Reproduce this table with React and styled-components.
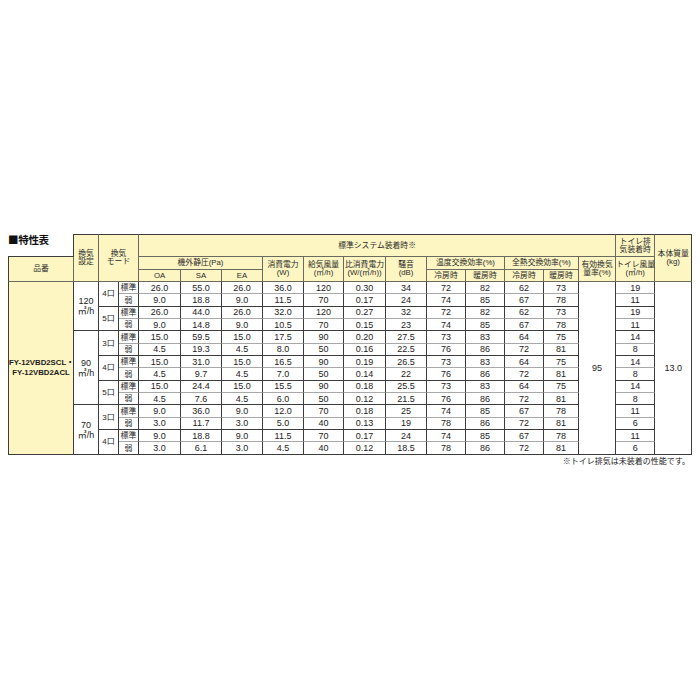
import React from 'react';
import styled, { createGlobalStyle } from 'styled-components';

const GlobalStyle = createGlobalStyle`
  html, body { margin: 0; padding: 0; background: #ffffff; }
  body {
    font-family: "Liberation Sans", "Noto Sans CJK JP", sans-serif;
    color: #222;
  }
`;

const YELLOW = '#fdf6c3';
const DARK = '#3c3c3c';
const SOFT = '#a8a8a8';
const HEAD_LINE = '#6a6a5e';

const Page = styled.div`
  width: 700px;
  height: 700px;
  box-sizing: border-box;
  padding: 234px 8px 0 8px;
`;

const Table = styled.table`
  width: 684px;
  table-layout: fixed;
  border-collapse: separate;
  border-spacing: 0;
`;

const Col = styled.col`
  width: ${p => p.$w}px;
`;

const HeadRow = styled.tr`
  height: ${p => p.$h}px;
`;

const BodyRow = styled.tr`
  height: 12.35px;
`;

const TitleCell = styled.th`
  padding: 0;
  background: #fff;
  text-align: left;
  vertical-align: top;
  font-family: "Noto Sans CJK JP", sans-serif;
  font-size: 10.5px;
  line-height: 11px;
  font-weight: bold;
  color: #111;
  letter-spacing: -0.3px;
  border-right: 1px solid ${DARK};
  border-bottom: 1px solid ${DARK};
  white-space: nowrap;
`;

const Th = styled.th`
  padding: 0;
  background: ${YELLOW};
  font-weight: normal;
  font-size: 7.8px;
  line-height: 7.8px;
  color: #2a2a2a;
  text-align: center;
  vertical-align: middle;
  white-space: nowrap;
  overflow: visible;
  border-right: 1px solid ${p => (p.$outer ? DARK : HEAD_LINE)};
  border-bottom: 1px solid ${HEAD_LINE};
  border-top: ${p => (p.$top ? `1px solid ${DARK}` : '0')};
  border-left: ${p => (p.$left ? `1px solid ${DARK}` : '0')};
`;

const Td = styled.td`
  padding: 0;
  font-size: 9px;
  line-height: 10px;
  color: #222;
  text-align: center;
  vertical-align: middle;
  white-space: nowrap;
  border-right: 1px solid ${DARK};
  border-bottom: 1px solid ${p => (p.$soft ? SOFT : DARK)};
`;

const CjkTd = styled(Td)`
  font-size: 8px;
  line-height: 9px;
`;

const ModelCell = styled.td`
  padding: 0;
  background: ${YELLOW};
  font-size: 7.8px;
  line-height: 10px;
  font-weight: bold;
  color: #1a1a1a;
  text-align: center;
  vertical-align: middle;
  white-space: nowrap;
  border-left: 1px solid ${DARK};
  border-right: 1px solid ${DARK};
  border-bottom: 1px solid ${DARK};
`;

const Note = styled.div`
  text-align: right;
  font-family: "Noto Sans CJK JP", sans-serif;
  font-size: 8px;
  line-height: 10px;
  color: #222;
  margin-top: 1px;
  padding-right: 2px;
`;

const widths = [66, 25, 20, 20, 42, 41, 41, 41, 40, 42, 41, 39, 39, 39, 35, 37, 39, 37];

const groups = [
  {
    set: '120',
    modes: [
      {
        m: '4口',
        rows: [
          ['標準', ['26.0', '55.0', '26.0', '36.0', '120', '0.30', '34', '72', '82', '62', '73'], '19'],
          ['弱', ['9.0', '18.8', '9.0', '11.5', '70', '0.17', '24', '74', '85', '67', '78'], '11'],
        ],
      },
      {
        m: '5口',
        rows: [
          ['標準', ['26.0', '44.0', '26.0', '32.0', '120', '0.27', '32', '72', '82', '62', '73'], '19'],
          ['弱', ['9.0', '14.8', '9.0', '10.5', '70', '0.15', '23', '74', '85', '67', '78'], '11'],
        ],
      },
    ],
  },
  {
    set: '90',
    modes: [
      {
        m: '3口',
        rows: [
          ['標準', ['15.0', '59.5', '15.0', '17.5', '90', '0.20', '27.5', '73', '83', '64', '75'], '14'],
          ['弱', ['4.5', '19.3', '4.5', '8.0', '50', '0.16', '22.5', '76', '86', '72', '81'], '8'],
        ],
      },
      {
        m: '4口',
        rows: [
          ['標準', ['15.0', '31.0', '15.0', '16.5', '90', '0.19', '26.5', '73', '83', '64', '75'], '14'],
          ['弱', ['4.5', '9.7', '4.5', '7.0', '50', '0.14', '22', '76', '86', '72', '81'], '8'],
        ],
      },
      {
        m: '5口',
        rows: [
          ['標準', ['15.0', '24.4', '15.0', '15.5', '90', '0.18', '25.5', '73', '83', '64', '75'], '14'],
          ['弱', ['4.5', '7.6', '4.5', '6.0', '50', '0.12', '21.5', '76', '86', '72', '81'], '8'],
        ],
      },
    ],
  },
  {
    set: '70',
    modes: [
      {
        m: '3口',
        rows: [
          ['標準', ['9.0', '36.0', '9.0', '12.0', '70', '0.18', '25', '74', '85', '67', '78'], '11'],
          ['弱', ['3.0', '11.7', '3.0', '5.0', '40', '0.13', '19', '78', '86', '72', '81'], '6'],
        ],
      },
      {
        m: '4口',
        rows: [
          ['標準', ['9.0', '18.8', '9.0', '11.5', '70', '0.17', '24', '74', '85', '67', '78'], '11'],
          ['弱', ['3.0', '6.1', '3.0', '4.5', '40', '0.12', '18.5', '78', '86', '72', '81'], '6'],
        ],
      },
    ],
  },
];

const rows = [];
groups.forEach(g => {
  const span = g.modes.reduce((n, md) => n + md.rows.length, 0);
  g.modes.forEach((md, mi) => {
    md.rows.forEach((r, ri) => {
      rows.push({
        set: g.set,
        setStart: mi === 0 && ri === 0,
        setSpan: span,
        mode: md.m,
        modeStart: ri === 0,
        kind: r[0],
        vals: r[1],
        toilet: r[2],
      });
    });
  });
});

export default function App() {
  return (
    <Page>
      <GlobalStyle />
      <Table>
        <colgroup>
          {widths.map((w, i) => (
            <Col key={i} $w={w} />
          ))}
        </colgroup>
        <thead>
          <HeadRow $h={23}>
            <TitleCell>■特性表</TitleCell>
            <Th rowSpan={3} $top>
              換気
              <br />
              設定
            </Th>
            <Th rowSpan={3} colSpan={2} $top>
              換気
              <br />
              モード
            </Th>
            <Th colSpan={12} $top>
              標準システム装着時※
            </Th>
            <Th $top>
              トイレ排
              <br />
              気装着時
            </Th>
            <Th rowSpan={3} $top $outer>
              本体質量
              <br />
              (kg)
            </Th>
          </HeadRow>
          <HeadRow $h={13}>
            <Th rowSpan={2} $left>
              品番
            </Th>
            <Th colSpan={3}>機外静圧(Pa)</Th>
            <Th rowSpan={2}>
              消費電力
              <br />
              (W)
            </Th>
            <Th rowSpan={2}>
              給気風量
              <br />
              (㎥/h)
            </Th>
            <Th rowSpan={2}>
              比消費電力
              <br />
              (W/(㎥/h))
            </Th>
            <Th rowSpan={2}>
              騒音
              <br />
              (dB)
            </Th>
            <Th colSpan={2}>温度交換効率(%)</Th>
            <Th colSpan={2}>全熱交換効率(%)</Th>
            <Th rowSpan={2}>
              有効換気
              <br />
              量率(%)
            </Th>
            <Th rowSpan={2}>
              トイレ風量
              <br />
              (㎥/h)
            </Th>
          </HeadRow>
          <HeadRow $h={12}>
            <Th>OA</Th>
            <Th>SA</Th>
            <Th>EA</Th>
            <Th>冷房時</Th>
            <Th>暖房時</Th>
            <Th>冷房時</Th>
            <Th>暖房時</Th>
          </HeadRow>
        </thead>
        <tbody>
          {rows.map((r, i) => {
            const soft = r.kind === '標準';
            return (
              <BodyRow key={i}>
                {i === 0 && (
                  <ModelCell rowSpan={rows.length}>
                    FY-12VBD2SCL・
                    <br />
                    FY-12VBD2ACL
                  </ModelCell>
                )}
                {r.setStart && (
                  <Td rowSpan={r.setSpan}>
                    {r.set}
                    <br />
                    ㎥/h
                  </Td>
                )}
                {r.modeStart && <CjkTd rowSpan={2}>{r.mode}</CjkTd>}
                <CjkTd $soft={soft}>{r.kind}</CjkTd>
                {r.vals.map((v, j) => (
                  <Td key={j} $soft={soft}>
                    {v}
                  </Td>
                ))}
                {i === 0 && <Td rowSpan={rows.length}>95</Td>}
                <Td $soft={soft}>{r.toilet}</Td>
                {i === 0 && <Td rowSpan={rows.length}>13.0</Td>}
              </BodyRow>
            );
          })}
        </tbody>
      </Table>
      <Note>※トイレ排気は未装着の性能です。</Note>
    </Page>
  );
}
